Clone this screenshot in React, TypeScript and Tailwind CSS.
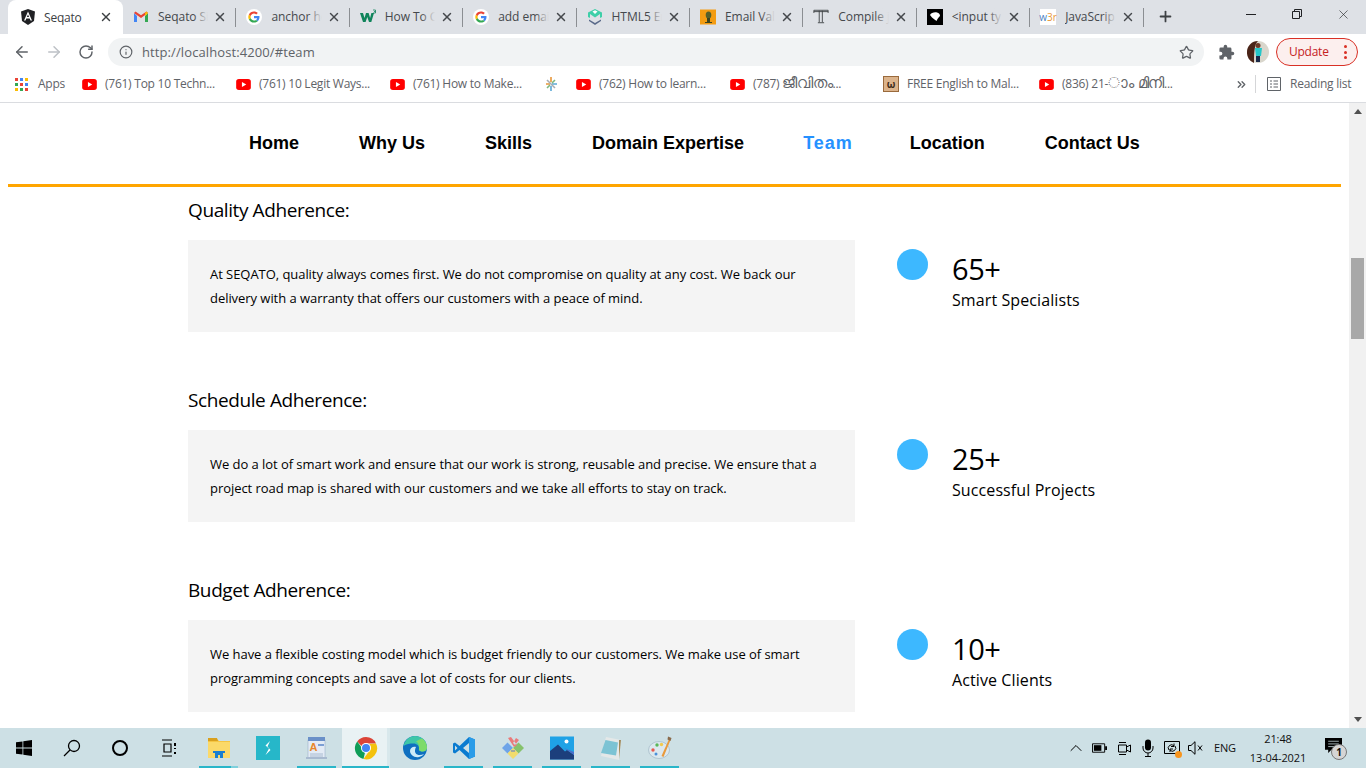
import { ArrowLeft, ArrowRight, ChevronsRight, ChevronUp, Info, Plus, RotateCw, Star, X } from "lucide-react";
import type { ReactNode } from "react";

const Angular = () => (
  <svg viewBox="0 0 16 16" className="h-4 w-4">
    <path d="M8 0 1 2.500l1 9.600L8 16l6-3.900 1-9.600z" fill="#202124" />
    <path d="M8 2.400 4 11.500h1.500l.8-2h3.400l.8 2H12zM6.900 8 8 5.400 9.100 8z" fill="#fff" />
  </svg>
);
const Gmail = () => (
  <svg viewBox="0 0 16 16" className="h-4 w-4">
    <path d="M1 4v9h3V7z" fill="#4285f4" />
    <path d="M12 7v6h3V4z" fill="#34a853" />
    <path d="M1 4l7 5 7-5-1.500-1.500L8 6.300 2.500 2.500z" fill="#ea4335" />
    <path d="M12 4v3l3-3-1.500-1.500z" fill="#fbbc04" />
  </svg>
);
const Google = () => (
  <svg viewBox="0 0 16 16" className="h-4 w-4">
    <circle cx="8" cy="8" r="8" fill="#fff" />
    <path d="M13.500 8.100c0-.4 0-.8-.1-1.100H8v2.200h3.100c-.1.700-.5 1.300-1.100 1.700l1.800 1.400c1.100-1 1.700-2.500 1.700-4.200z" fill="#4285f4" />
    <path d="M8 13.600c1.500 0 2.800-.5 3.800-1.400L10 10.900c-.5.300-1.200.6-2 .6-1.500 0-2.800-1-3.300-2.400L2.900 10.500C3.800 12.400 5.700 13.600 8 13.600z" fill="#34a853" />
    <path d="M4.700 9.100c-.2-.7-.2-1.500 0-2.200L2.900 5.500c-.8 1.500-.8 3.400 0 5z" fill="#fbbc04" />
    <path d="M8 4.600c.8 0 1.600.3 2.200.9l1.600-1.600C10.800 2.900 9.500 2.400 8 2.400c-2.300 0-4.200 1.200-5.100 3.100l1.800 1.400C5.200 5.600 6.500 4.600 8 4.600z" fill="#ea4335" />
  </svg>
);
const W3 = () => (
  <svg viewBox="0 0 16 16" className="h-4 w-4">
    <path d="M0 4h3l1.500 5L6 4h2.600l1.500 5 1.300-5H14l-2.700 9H9L7.300 8l-1.700 5H3z" fill="#10845b" />
    <path d="M13 1h2.500v3H13M14 2.500h1.500" fill="none" stroke="#10845b" strokeWidth="0.800" />
  </svg>
);
const Mimo = () => (
  <svg viewBox="0 0 16 16" className="h-4 w-4">
    <path d="M8 0l7 3.500V8l-2 1V5L8 8.500 3 5v4L1 8V3.500z" fill="#3ecfa8" />
    <path d="M5.500 2.500 8 5l2.500-2.500L8 1.200z" fill="#fff" />
    <path d="M2 10.500l6 3.500 6-3.500V12l-6 4-6-4z" fill="#5a6a8a" />
  </svg>
);
const EmailVal = () => (
  <svg viewBox="0 0 16 16" className="h-4 w-4">
    <rect width="16" height="15" y="0.500" fill="#f39c12" />
    <ellipse cx="8.500" cy="6" rx="2.800" ry="3.500" fill="#55602c" />
    <rect x="7" y="9" width="3" height="4" fill="#3c4420" />
    <rect x="5" y="13" width="7" height="1" fill="#3c4420" />
  </svg>
);
const TypeT = () => (
  <svg viewBox="0 0 18 18" className="h-[17px] w-[17px]" fill="none" stroke="#3c4043">
    <path d="M1 5V2h16v3M1 3.500h16M7 2.500V15.500M10.500 2.500V15.500M5.500 16h7" strokeWidth="1" />
  </svg>
);
const BlackBlob = () => (
  <svg viewBox="0 0 16 16" className="h-4 w-4">
    <rect width="16" height="16" fill="#000" />
    <path d="M3 6c1-2 4-3 7-2.500 2 .3 3 2 3 3.500l-1 1-1.500 2-1 2-2-1.500L5 8.500z" fill="#fff" />
  </svg>
);
const W3r = () => (
  <span className="flex h-4 w-4 items-center justify-center bg-white text-[10px] leading-none">
    <span className="text-[#4a7fc1]">w</span>
    <span className="text-[#e8963a]">3r</span>
  </span>
);
const Youtube = () => (
  <svg viewBox="0 0 16 12" className="h-[11px] w-[15px] shrink-0">
    <rect width="16" height="12" rx="3" fill="#f00" />
    <path d="M6.300 3.300v5.400L11 6z" fill="#fff" />
  </svg>
);

const tabs = [
  { icon: <Gmail />, title: "Seqato Si" },
  { icon: <Google />, title: "anchor he" },
  { icon: <W3 />, title: "How To C" },
  { icon: <Google />, title: "add emai" },
  { icon: <Mimo />, title: "HTML5 Er" },
  { icon: <EmailVal />, title: "Email Vali" },
  { icon: <TypeT />, title: "Compile j" },
  { icon: <BlackBlob />, title: "<input ty" },
  { icon: <W3r />, title: "JavaScrip" },
];

function TabStrip() {
  return (
    <div className="flex h-[34px] items-stretch bg-[#dee1e6] pl-[8px]">
      <div className="flex h-[34px] w-[115px] items-center rounded-t-lg bg-white pl-[12px] pr-[10px]">
        <Angular />
        <span className="ml-[8px] flex-1 pt-[1px] text-[12px] tracking-[-0.2px] text-[#3c4043]">Seqato</span>
        <X size={14} strokeWidth={2.5} className="text-[#3c4043]" />
      </div>
      {tabs.map((t) => (
        <div key={t.title} className="relative flex w-[113.400px] items-center pb-[1px] pl-[10px] pr-[9px]">
          <span className="flex w-4 shrink-0 justify-center">{t.icon}</span>
          <div className="relative ml-[9px] flex-1 overflow-hidden whitespace-nowrap pt-[1px] text-[12px] tracking-[-0.05px] text-[#45484c]">
            {t.title}
            <span className="absolute inset-y-0 right-0 w-[14px] bg-gradient-to-r from-transparent to-[#dee1e6]" />
          </div>
          <X size={14} strokeWidth={2.5} className="ml-[5px] shrink-0 text-[#45484c]" />
          <span className="absolute right-0 top-[8px] h-[19px] w-px bg-[#8b8e92]" />
        </div>
      ))}
      <div className="flex w-[44px] items-center justify-center pb-[2px]">
        <Plus size={17} strokeWidth={2.5} className="text-[#3c4043]" />
      </div>
      <div className="flex-1" />
      <div className="flex w-[138px] items-start text-[#202124]">
        <div className="flex h-[28px] w-[46px] items-center justify-center">
          <span className="h-px w-[10px] bg-[#202124]" />
        </div>
        <div className="flex h-[28px] w-[46px] items-center justify-center">
          <svg viewBox="0 0 10 10" className="h-[10px] w-[10px]" fill="none" stroke="#202124">
            <path d="M.5 2.500h7v7h-7zM2.500 2.500v-2h7v7h-2" />
          </svg>
        </div>
        <div className="flex h-[28px] w-[46px] items-center justify-center">
          <X size={15} strokeWidth={1} />
        </div>
      </div>
    </div>
  );
}

function Toolbar() {
  return (
    <div className="flex h-[32px] items-start bg-white pt-[4px]">
      <div className="flex h-[28px] w-[108px] shrink-0 items-center pl-[13px]">
        <ArrowLeft size={18} strokeWidth={2} className="text-[#5f6368]" />
        <ArrowRight size={18} strokeWidth={2} className="ml-[14px] text-[#bdc1c6]" />
        <RotateCw size={16} strokeWidth={2.2} className="ml-[15px] text-[#5f6368]" />
      </div>
      <div className="flex h-[28px] w-[1096px] items-center rounded-full bg-[#f1f3f4] pl-[11px] pr-[10px]">
        <Info size={14} strokeWidth={2} className="text-[#5f6368]" />
        <span className="ml-[9px] flex-1 pt-[1px] text-[13px] tracking-[0.1px] text-[#5f6368]">http://localhost:4200/#team</span>
        <Star size={15} strokeWidth={2} className="text-[#5f6368]" />
      </div>
      <div className="flex h-[28px] w-[72px] items-center pl-[14px]">
        <svg viewBox="0 0 24 24" className="h-[17px] w-[17px] shrink-0" fill="#5f6368">
          <path d="M20.500 11H19V7a2 2 0 0 0-2-2h-4V3.500a2.500 2.500 0 0 0-5 0V5H4a2 2 0 0 0-2 2v3.800h1.500a2.700 2.700 0 0 1 0 5.400H2V20a2 2 0 0 0 2 2h3.800v-1.500a2.700 2.700 0 0 1 5.400 0V22H17a2 2 0 0 0 2-2v-4h1.500a2.500 2.500 0 0 0 0-5z" />
        </svg>
        <svg viewBox="0 0 22 22" className="ml-[12px] h-[22px] w-[22px] shrink-0">
          <circle cx="11" cy="11" r="11" fill="#d9d6cc" />
          <path d="M0 11a11 11 0 0 1 11-11c-3 3-4 8-4 22A11 11 0 0 1 0 11z" fill="#4a2418" />
          <path d="M8 7h7l-1 8H9z" fill="#25c7c9" />
          <path d="M9 15h4v6H9z" fill="#1c2a4a" />
          <circle cx="11" cy="4.500" r="2.500" fill="#6b3a28" />
        </svg>
      </div>
      <div className="flex h-[28px] w-[82px] items-center rounded-full border border-[#d93025] bg-[#fcefee] pl-[12px]">
        <span className="w-[55px] text-[12px] tracking-[-0.25px] text-[#c5221f]">Update</span>
        <span className="flex flex-col gap-[2.500px]">
          <span className="h-[3px] w-[3px] rounded-full bg-[#d93025]" />
          <span className="h-[3px] w-[3px] rounded-full bg-[#d93025]" />
          <span className="h-[3px] w-[3px] rounded-full bg-[#d93025]" />
        </span>
      </div>
    </div>
  );
}

const appsColors = ["#ea4335", "#4285f4", "#fbbc04", "#34a853", "#ea4335", "#4285f4", "#fbbc04", "#34a853", "#ea4335"];

function Bookmark({ icon, label, width, gap }: { icon: ReactNode; label: ReactNode; width: number; gap: number }) {
  return (
    <div className="flex items-center" style={{ width, marginLeft: gap }}>
      {icon}
      <span className="ml-[8px] whitespace-nowrap">{label}</span>
    </div>
  );
}

function Bookmarks() {
  return (
    <div className="flex h-[37px] items-center border-b border-[#dadce0] bg-white text-[12px] tracking-[-0.25px] text-[#5f6368]">
      <div className="ml-[15px] grid grid-cols-3 gap-[2px]">
        {appsColors.map((c, i) => (
          <span key={i} className="h-[3px] w-[3px]" style={{ backgroundColor: c }} />
        ))}
      </div>
      <span className="ml-[10px] w-[27px]">Apps</span>
      <Bookmark icon={<Youtube />} label="(761) Top 10 Techn..." width={134} gap={17} />
      <Bookmark icon={<Youtube />} label="(761) 10 Legit Ways..." width={137} gap={20} />
      <Bookmark icon={<Youtube />} label="(761) How to Make..." width={134} gap={17} />
      <svg viewBox="0 0 16 16" className="ml-[19px] h-4 w-4 shrink-0" fill="none" strokeWidth="1.600">
        <path d="M8 1v5M3 8h4" stroke="#e8963a" />
        <path d="M9 8h5M8 10v5" stroke="#5aa9d6" />
        <path d="M4 4l8 8" stroke="#a7adb5" />
        <path d="M12 4l-3 3M4 12l3-3" stroke="#7fb77e" />
      </svg>
      <Bookmark icon={<Youtube />} label="(762) How to learn..." width={131} gap={17} />
      <Bookmark
        icon={<Youtube />}
        label={
          <>
            (787) <span className="text-[15px] leading-none">ജീവിതം</span>...
          </>
        }
        width={119}
        gap={23}
      />
      <span className="ml-[34px] flex h-4 w-4 shrink-0 items-center justify-center border border-[#9a6a3c] bg-[#dcb48c] text-[10px] font-bold leading-none text-[#3c2a18]">
        ω
      </span>
      <span className="ml-[8px] w-[114px] whitespace-nowrap">FREE English to Mal...</span>
      <Bookmark
        icon={<Youtube />}
        label={
          <>
            (836) 21-<span className="text-[15px] leading-none">ാം മിനി</span>...
          </>
        }
        width={138}
        gap={18}
      />
      <ChevronsRight size={13} strokeWidth={2.5} className="ml-[58px] text-[#5f6368]" />
      <span className="ml-[7px] h-[18px] w-px bg-[#d5d6d8]" />
      <svg viewBox="0 0 14 14" className="ml-[11px] h-[14px] w-[14px]" fill="none" stroke="#5f6368">
        <path d="M.500.500h13v13H.500zM3 4h2M3 7h2M3 10h2M6.500 4H11M6.500 7H11M6.500 10H11" />
      </svg>
      <span className="ml-[9px] whitespace-nowrap">Reading list</span>
    </div>
  );
}

const navItems = ["Home", "Why Us", "Skills", "Domain Expertise", "Team", "Location", "Contact Us"];

function Nav() {
  return (
    <nav className="ml-[8px] flex h-[84px] w-[1333px] items-center gap-[60px] border-b-[3px] border-[#ffa500] pl-[241px] font-['Liberation_Sans',sans-serif] text-[18px] font-bold text-black">
      {navItems.map((n) => (
        <span key={n} className={n === "Team" ? "-ml-[1px] -mr-[3px] tracking-[1px] text-[#2591ff]" : ""}>
          {n}
        </span>
      ))}
    </nav>
  );
}

const sections = [
  {
    title: "Quality Adherence:",
    lines: [
      "At SEQATO, quality always comes first. We do not compromise on quality at any cost. We back our",
      "delivery with a warranty that offers our customers with a peace of mind.",
    ],
    stat: "65+",
    label: "Smart Specialists",
  },
  {
    title: "Schedule Adherence:",
    lines: [
      "We do a lot of smart work and ensure that our work is strong, reusable and precise. We ensure that a",
      "project road map is shared with our customers and we take all efforts to stay on track.",
    ],
    stat: "25+",
    label: "Successful Projects",
  },
  {
    title: "Budget Adherence:",
    lines: [
      "We have a flexible costing model which is budget friendly to our customers. We make use of smart",
      "programming concepts and save a lot of costs for our clients.",
    ],
    stat: "10+",
    label: "Active Clients",
  },
];

function Section({ s }: { s: (typeof sections)[number] }) {
  return (
    <section className="h-[190px]">
      <h3 className="h-[42px] pl-[188px] text-[19px] font-normal leading-[24px] tracking-[-0.4px] text-black">{s.title}</h3>
      <div className="flex">
        <div className="ml-[188px] flex h-[92px] w-[667px] flex-col justify-center bg-[#f4f4f4] pl-[22px] text-[13px] leading-[24px] tracking-[-0.05px] text-black">
          {s.lines.map((l) => (
            <p key={l} className="whitespace-nowrap">
              {l}
            </p>
          ))}
        </div>
        <div className="ml-[42px] mt-[9px] h-[31px] w-[31px] rounded-full bg-[#3db8ff]" />
        <div className="ml-[24px] pt-[9px] text-black">
          <div className="text-[29px] leading-[40px] tracking-[-0.4px]">{s.stat}</div>
          <div className="text-[16px] leading-[22px] tracking-[0.1px]">{s.label}</div>
        </div>
      </div>
    </section>
  );
}

function Scrollbar() {
  return (
    <div className="flex w-[17px] shrink-0 flex-col items-center bg-[#f1f1f1]">
      <div className="flex h-[17px] items-center justify-center">
        <span className="h-0 w-0 border-x-[4px] border-b-[5px] border-x-transparent border-b-[#505050]" />
      </div>
      <div className="mt-[138px] h-[81px] w-[13px] bg-[#a8a8a8]" />
      <div className="flex-1" />
      <div className="flex h-[17px] items-center justify-center">
        <span className="h-0 w-0 border-x-[4px] border-t-[5px] border-x-transparent border-t-[#505050]" />
      </div>
    </div>
  );
}

const Explorer = () => (
  <svg viewBox="0 0 24 24" className="h-6 w-6">
    <path d="M1 3h9l2 2h11v17H1z" fill="#f5c542" />
    <path d="M1 2h9l1 3H1z" fill="#d9a01e" />
    <path d="M1 6h22v16H1z" fill="#fbd969" />
    <path d="M6 15h12v2h-2v5h-3v-3h-2v3H8v-5H6z" fill="#1a7fd0" />
  </svg>
);
const Sublime = () => (
  <svg viewBox="0 0 24 24" className="h-6 w-6">
    <rect width="24" height="24" fill="#26b7c9" />
    <path d="M14 5l-4.500 4.500 3.500 3-3.500 6.500 5-5-3-3.500z" fill="#fff" />
  </svg>
);
const WordPad = () => (
  <svg viewBox="0 0 24 24" className="h-6 w-6">
    <rect x="3" y="4" width="17" height="18" fill="#e3ebf5" stroke="#8ea4c4" strokeWidth="0.500" />
    <rect x="3" y="1" width="17" height="4" fill="#6a90c8" />
    <rect x="1" y="21" width="21" height="2" fill="#a8bad0" />
    <text x="4.500" y="15" fontSize="11" fontWeight="700" fill="#e8862a" fontFamily="Liberation Sans">A</text>
    <path d="M13 9h6" stroke="#5a86c8" strokeWidth="1.500" />
    <path d="M5 18h13M5 20h13" stroke="#a8bad0" />
  </svg>
);
const Chrome = () => (
  <svg viewBox="0 0 24 24" className="h-6 w-6">
    <path d="M12 1A11 11 0 0 1 22 7.500H12A4.500 4.500 0 0 0 7.800 10.300L3.200 5.500A11 11 0 0 1 12 1z" fill="#db4437" />
    <path d="M3.200 5.500 8 12a4.500 4.500 0 0 0 3 4.500L9.500 23A11 11 0 0 1 3.200 5.500z" fill="#0f9d58" />
    <path d="M22 7.500A11 11 0 0 1 9.500 23L15.500 14.500A4.500 4.500 0 0 0 15 8z" fill="#f4c20d" />
    <circle cx="12" cy="12" r="5" fill="#fff" />
    <circle cx="12" cy="12" r="4" fill="#4285f4" />
  </svg>
);
const Edge = () => (
  <svg viewBox="0 0 24 24" className="h-6 w-6">
    <circle cx="12" cy="12" r="12" fill="#0f6fc0" />
    <path d="M0.500 10C2 3.500 7 0 12 0c7 0 12 5 12 11.500 0 3-2.500 4.500-5.500 4-2-.4-3-1.500-2.500-3 .3-2.500-2-5-5.500-5C7 7.500 3 8 .5 10z" fill="#3fc6a8" />
    <path d="M19 2.500c3 2 5 5.500 5 9 0 3-2.500 4.500-5.500 4-2-.4-3-1.500-2.500-3 .5-3-1-6-3-7 2-1.500 4-2.500 6-3z" fill="#7edb6a" />
    <path d="M13 11c-3-1-6 1-6 4 0 3.500 4 7 9 6 2-.4 3.500-1.200 5-3-3 1.500-7 1.500-8.500-1-1-1.500-.5-4 .5-6z" fill="#cdeaf8" />
  </svg>
);
const VSCode = () => (
  <svg viewBox="0 0 24 24" className="h-6 w-6">
    <path d="M17 1 7.500 10 3 6.500 1 7.500v9l2 1L7.500 14 17 23l6-2.500v-17zM17 7v10l-6-5zM3 9.500 5.500 12 3 14.500z" fill="#0a7bd0" />
    <path d="M17 1l6 2.500v17L17 23z" fill="#2a9ce8" />
  </svg>
);
const GitApp = () => (
  <svg viewBox="0 0 24 24" className="h-6 w-6">
    <path d="M6.500 6.500 12 12l-5.500 5.500L1 12z" fill="#6ea4e8" />
    <path d="M17.500 6.500 23 12l-5.500 5.500L12 12z" fill="#86c26c" />
    <path d="M12 12l5.500 5.500L12 23l-5.500-5.500z" fill="#f2dc6c" />
    <path d="M7 2l3-1 6 8-3 2zM18 4l-3-2-3 5 2 2z" fill="#ea7a7a" />
    <path d="M10 14l4 0v2l-4 0z" fill="#a0a8a0" />
  </svg>
);
const Photos = () => (
  <svg viewBox="0 0 24 24" className="h-6 w-6">
    <rect y="0.500" width="24" height="23" fill="#1fa2e6" />
    <circle cx="16.500" cy="5.500" r="2" fill="#fff" />
    <path d="M0 23.500V15l8-6.500 7 7 2-1.500 7 5v4.500z" fill="#1c3f7c" />
    <path d="M14 12l3 2 7 5v-3z" fill="#4a6ec8" />
  </svg>
);
const NotePad = () => (
  <svg viewBox="0 0 24 24" className="h-6 w-6">
    <path d="M7 1l15 3-2 20-18-4z" fill="#e4e8e8" />
    <path d="M20 4l2 0-2 19z" fill="#a08a5c" />
    <path d="M6.500 4l12.500 2.500-2 13L2 17z" fill="#7cc3d4" />
  </svg>
);
const Paint = () => (
  <svg viewBox="0 0 24 24" className="h-6 w-6">
    <ellipse cx="11" cy="14" rx="10.500" ry="8.500" fill="#dce8ee" stroke="#8fa8b8" strokeWidth="0.500" />
    <circle cx="5" cy="14" r="1.700" fill="#e85a4f" />
    <circle cx="9" cy="9" r="1.700" fill="#5ab85a" />
    <circle cx="13.500" cy="8.500" r="1.700" fill="#f2c94c" />
    <circle cx="8" cy="18" r="1.500" fill="#4a90d9" />
    <path d="M21 3l1.500 1-7 17-2-1z" fill="#e89a3c" />
    <path d="M20 .5l3.500 1.500-1 3-3-1.500z" fill="#8a6a4a" />
  </svg>
);

const apps: { icon: ReactNode; run: boolean; active?: boolean }[] = [
  { icon: <Explorer />, run: true },
  { icon: <Sublime />, run: false },
  { icon: <WordPad />, run: true },
  { icon: <Chrome />, run: true, active: true },
  { icon: <Edge />, run: false },
  { icon: <VSCode />, run: true },
  { icon: <GitApp />, run: true },
  { icon: <Photos />, run: true },
  { icon: <NotePad />, run: true },
  { icon: <Paint />, run: true },
];

function Taskbar() {
  return (
    <div className="flex h-[40px] items-stretch bg-[#cde0e5] font-['Open_Sans',sans-serif] text-[#111]">
      <div className="flex w-[48px] items-center justify-center">
        <svg viewBox="0 0 16 16" className="h-4 w-4" fill="#000">
          <path d="M0 2.300 6.500 1.400v6.200H0zM7.300 1.300 16 0v7.600H7.300zM0 8.400h6.500v6.200L0 13.700zM7.300 8.400H16V16l-8.700-1.300z" />
        </svg>
      </div>
      <div className="flex w-[48px] items-center justify-center">
        <svg viewBox="0 0 18 18" className="h-[18px] w-[18px]" fill="none" stroke="#000" strokeWidth="1.300">
          <circle cx="11" cy="7" r="5.500" />
          <path d="M7 11 1 17" />
        </svg>
      </div>
      <div className="flex w-[48px] items-center justify-center">
        <span className="h-[16px] w-[16px] rounded-full border-[2.500px] border-black" />
      </div>
      <div className="flex w-[50px] items-center justify-center">
        <svg viewBox="0 0 16 18" className="h-[18px] w-[16px]" fill="none" stroke="#000" strokeWidth="1.200">
          <path d="M1 1h10M1 17h10M3 5h7v8H3z" />
          <path d="M14 4v3M14 9v1M14 13v2" strokeWidth="2" />
        </svg>
      </div>
      {apps.map((a, i) => (
        <div key={i} className="relative flex w-[49px] items-center justify-center pb-[1px]">
          {a.active && (
            <>
              <span className="absolute inset-y-0 left-[1px] right-[3px] bg-[#e9f2f4]" />
              <span className="absolute inset-y-0 right-0 w-[3px] bg-[#d8e8ec]" />
            </>
          )}
          <span className="relative">{a.icon}</span>
          {a.run && <span className={`absolute bottom-0 h-[2px] bg-[#29b6c9] ${a.active ? "inset-x-[1px]" : "inset-x-[5px]"}`} />}
          {i === 0 && <span className="absolute bottom-0 left-[37px] right-[5px] h-[2px] bg-[#7fd0dc]" />}
        </div>
      ))}
      <div className="flex-1" />
      <div className="flex items-center pr-[21px]">
        <ChevronUp size={20} strokeWidth={1.2} className="text-black" />
        <svg viewBox="0 0 16 10" className="ml-[6px] h-[10px] w-[15px]" fill="none" stroke="#000">
          <path d="M.5.5h13v9H.5z" />
          <path d="M2 2h8v6H2z" fill="#000" stroke="none" />
          <path d="M14 3h2v4h-2z" fill="#000" stroke="none" />
        </svg>
        <svg viewBox="0 0 16 16" className="ml-[10px] h-[16px] w-[16px]" fill="none" stroke="#000">
          <path d="M1.500 5h8v7h-8zM9.500 7l4-2v7l-4-2" />
          <path d="M2 2.500h7M2 14.500h7" />
        </svg>
        <svg viewBox="0 0 12 18" className="ml-[9px] h-[18px] w-[12px]">
          <rect x="3" y="0.500" width="6" height="11" rx="3" fill="#000" />
          <path d="M1 7v2a5 5 0 0 0 10 0V7M6 14v3M3 17.500h6" fill="none" stroke="#000" />
        </svg>
        <div className="relative ml-[10px] h-[16px] w-[16px]">
          <svg viewBox="0 0 16 16" className="h-[16px] w-[16px]" fill="none" stroke="#000">
            <path d="M.5 1.500h15v12H.5zM5 10a3 3 0 0 1 5-4M11 6a3 3 0 0 1-5 4M10 3.500v3H7M6 12V9h3" />
          </svg>
          <span className="absolute -bottom-[2px] -right-[2px] h-[7px] w-[7px] rounded-full bg-[#f7941d]" />
        </div>
        <svg viewBox="0 0 16 14" className="ml-[8px] h-[14px] w-[16px]" fill="none" stroke="#000">
          <path d="M.5 4.500H3L7 .7v12.600L3 9.500H.5z" />
          <path d="M10 4.500l4 5M14 4.500l-4 5" />
        </svg>
        <span className="ml-[10px] text-[11px] tracking-[-0.1px]">ENG</span>
        <div className="ml-[13px] w-[58px] text-center text-[11px] leading-[19px] tracking-[-0.1px]">
          <div>21:48</div>
          <div className="whitespace-nowrap">13-04-2021</div>
        </div>
        <div className="relative ml-[18px] h-[20px] w-[20px]">
          <svg viewBox="0 0 16 14" className="h-[15px] w-[17px]" fill="#000">
            <path d="M0 0h16v11H6l-3 3v-3H0z" />
            <path d="M3 3h10M3 5.500h10M3 8h10" stroke="#cde0e5" strokeWidth="0.700" />
          </svg>
          <span className="absolute -bottom-[2px] -right-[2px] flex h-[16px] w-[16px] items-center justify-center rounded-full border border-[#777] bg-[#d5d5d5] text-[10px] font-bold leading-none">
            1
          </span>
        </div>
      </div>
    </div>
  );
}

export default function App() {
  return (
    <div className="flex h-[768px] w-[1366px] flex-col overflow-hidden bg-white font-['Open_Sans',sans-serif]">
      <TabStrip />
      <Toolbar />
      <Bookmarks />
      <div className="flex h-[625px] overflow-hidden">
        <main className="min-w-0 flex-1 overflow-hidden">
          <Nav />
          <div className="pt-[11px]">
            {sections.map((s) => (
              <Section key={s.title} s={s} />
            ))}
          </div>
        </main>
        <Scrollbar />
      </div>
      <Taskbar />
    </div>
  );
}
